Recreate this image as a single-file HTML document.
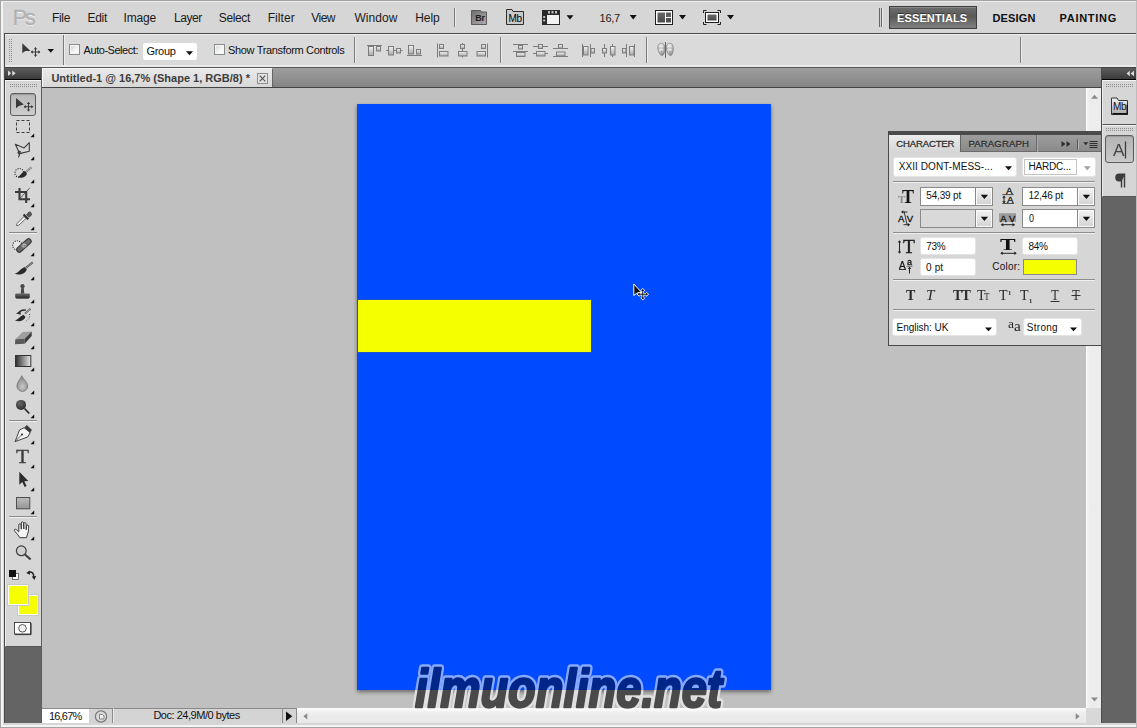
<!DOCTYPE html>
<html lang="en"><head><meta charset="utf-8"><title>Untitled-1 @ 16,7% (Shape 1, RGB/8) *</title>
<style>
*{box-sizing:border-box;margin:0;padding:0}
html,body{width:1137px;height:728px;overflow:hidden}
body{position:relative;background:#d6d6d6;font-family:"Liberation Sans",sans-serif;font-size:11px;color:#000}
.a{position:absolute}
.t{position:absolute;white-space:nowrap;line-height:1}
/* window frame */
#frame{left:0;top:0;width:1137px;height:728px;border:1px solid #a4a4a4;border-right-color:#bcbcbc;z-index:50;pointer-events:none}
#frame2{left:1px;top:1px;width:1135px;height:726px;border-left:2px solid #f4f4f4;border-bottom:2px solid #f4f4f4;border-top:1px solid #ececec;z-index:49}
#lgap{left:3px;top:33px;width:1px;height:691px;background:#cfcfcf}
#bline{left:4px;top:723px;width:1132px;height:1px;background:#3c3c3c}
#bline2{left:3px;top:724px;width:1133px;height:1px;background:#dcdcdc}
/* app/menu bar */
#ess{left:889px;top:6px;width:88px;height:23px;border:1px solid #3e3e3e;background:linear-gradient(#6e6e6e,#5a5a5a 45%,#808080);box-shadow:inset 0 1px 0 #8a8a8a}
.vsep{width:1px;background:#7a7a7a;box-shadow:1px 0 0 #ececec}
/* options bar */
#optbar{left:4px;top:33px;width:1132px;height:34px;background:#dadada;border-top:1px solid #4a4a4a;border-left:1px solid #4a4a4a;box-shadow:inset 0 1px 0 #f0f0f0}
#optbot{left:5px;top:65px;width:1131px;height:2px;background:#e9e9e9}
.cb{width:11px;height:11px;border:1px solid #8c8c8c;background:linear-gradient(135deg,#cfd4d8,#f4f6f7 60%,#fff);box-shadow:inset 0 0 0 1px #f4f4f4}
#grp{left:143px;top:43px;width:54px;height:17px;background:#fff;border-radius:2px}
/* tab bar */
#tabbar{left:4px;top:67px;width:1132px;height:21px;background:linear-gradient(#9d9d9d,#858585);border-top:1px solid #555;border-bottom:1px solid #444}
#tab{left:42px;top:68px;width:231px;height:19px;background:linear-gradient(#e9e9e9,#d8d8d8);border-left:1px solid #f6f6f6;border-top:1px solid #f6f6f6;border-right:1px solid #666}
#tabx{left:257px;top:73px;width:11px;height:11px;border:1px solid #8e8e8e;background:#e2e2e2}
/* left tool dock */
#ldock{left:4px;top:67px;width:38px;height:656px;background:#646464;border-left:1px solid #4a4a4a;border-right:1px solid #5e5e5e}
#lhead{left:5px;top:67px;width:36px;height:13px;background:linear-gradient(#5c5c5c,#3a3a3a);border-bottom:1px solid #000;border-top:1px solid #444}
#tools{left:5px;top:80px;width:36px;height:567px;background:#d6d6d6;border-top:1px solid #f4f4f4;border-left:1px solid #ececec;border-bottom:1px solid #555}
.grip{height:3px;background-image:radial-gradient(circle at 0.5px 0.5px,#8e8e8e 0.6px,transparent 0.7px);background-size:2px 2px}
.hsep{height:1px;background:#8a8a8a;box-shadow:0 1px 0 #f0f0f0}
#mvbtn{left:10px;top:93px;width:26px;height:23px;border:1px solid #5e5e5e;border-radius:3px;background:linear-gradient(#b9b9b9,#cdcdcd);box-shadow:inset 0 1px 1px #999}
/* canvas */
#canvas{left:42px;top:88px;width:1044px;height:620px;background:#c0c0c0}
#doc{left:357px;top:104px;width:414px;height:586px;background:#004bff;box-shadow:0 2px 4px rgba(0,0,0,.45)}
#yel{left:358px;top:300px;width:233px;height:52px;background:#f6ff00;box-shadow:0 0 0 1px rgba(70,90,150,.5)}
#vscroll{left:1086px;top:88px;width:15px;height:620px;background:linear-gradient(90deg,#fdfdfd,#f2f2f2 12%,#ececec 30%,#ededed)}
#vsb{left:1101px;top:67px;width:1px;height:656px;background:#4a4a4a}
/* status bar */
#status{left:42px;top:708px;width:1044px;height:15px;background:linear-gradient(#fdfdfd,#ededed 35%,#e9e9e9)}
#zoomf{left:42px;top:708px;width:47px;height:15px;background:#fff;border-top:1px solid #8a8a8a}
#sticon{left:89px;top:708px;width:24px;height:15px;background:#d4d4d4;border-right:1px solid #8a8a8a;border-top:1px solid #8a8a8a}
#docinfo{left:113px;top:708px;width:170px;height:15px;background:#d4d4d4;border-right:1px solid #8a8a8a;border-left:1px solid #ececec;border-top:1px solid #8a8a8a}
#playb{left:283px;top:708px;width:14px;height:15px;background:#d4d4d4;border-right:1px solid #8a8a8a;border-top:1px solid #8a8a8a}
#corner{left:1086px;top:708px;width:15px;height:15px;background:#d8d8d8}
/* right dock */
#rdock{left:1102px;top:67px;width:34px;height:656px;background:#646464}
#rhead{left:1102px;top:67px;width:34px;height:13px;background:linear-gradient(#5c5c5c,#3a3a3a);border-bottom:1px solid #000;border-top:1px solid #444}
.rp{left:1102px;width:34px;background:#d6d6d6;border-top:1px solid #f4f4f4;border-left:1px solid #ececec;border-bottom:1px solid #555}
#abtn{left:1105px;top:135px;width:29px;height:28px;border:1px solid #5e5e5e;border-radius:3px;background:linear-gradient(#b4b4b4,#c9c9c9);box-shadow:inset 0 1px 1px #999}
/* character panel */
#cp{left:888px;top:131px;width:214px;height:215px;background:#d6d6d6;border:1px solid #4a4a4a;border-top:4px solid #4a4a4a}
#cptabs{left:889px;top:135px;width:212px;height:17px;background:linear-gradient(#9d9d9d,#8a8a8a);border-bottom:1px solid #6c6c6c}
#cpt1{left:889px;top:135px;width:72px;height:17px;background:linear-gradient(#ececec,#d6d6d6);border-right:1px solid #666}
#cpt2{left:961px;top:135px;width:76px;height:17px;border-right:1px solid #6c6c6c;box-shadow:1px 0 0 #a8a8a8}
.wf{background:#fff;border-radius:2px;box-shadow:0 0 0 1px #e4e4e4}
.combo{border:1px solid #8a8a8a;background:#fff}
.cbtn{border:1px solid #8a8a8a;background:linear-gradient(#f4f4f4,#d2d2d2);box-shadow:inset 0 0 0 1px #fbfbfb}
.psep{left:893px;width:202px;height:1px;background:#8e8e8e;box-shadow:0 1px 0 #f0f0f0}

</style></head><body>
<div class="a" id="frame"></div><div class="a" id="frame2"></div>
<!-- app bar -->
<div class="a vsep" style="left:454px;top:8px;height:19px"></div>
<div class="a vsep" style="left:879px;top:8px;height:19px;box-shadow:none;background:#666"></div>
<div class="a vsep" style="left:881px;top:8px;height:19px;background:#666"></div>
<div class="a" id="ess"></div>
<!-- options bar -->
<div class="a" id="optbar"></div><div class="a" id="optbot"></div>
<div class="a" style="left:9px;top:39px;width:4px;height:23px;background-image:radial-gradient(circle at 0.5px 0.5px,#8e8e8e 0.6px,transparent 0.7px);background-size:2px 2px"></div>
<div class="a vsep" style="left:63px;top:35px;height:30px"></div>
<div class="a cb" style="left:69px;top:44px"></div>
<div class="a" id="grp"></div>
<div class="a cb" style="left:214px;top:44px"></div>
<div class="a vsep" style="left:354px;top:37px;height:26px"></div>
<div class="a vsep" style="left:500px;top:37px;height:26px"></div>
<div class="a vsep" style="left:646px;top:37px;height:26px"></div>
<div class="a vsep" style="left:1020px;top:37px;height:26px"></div>
<!-- tab bar -->
<div class="a" id="tabbar"></div>
<div class="a" id="tab"></div><div class="a" id="tabx"></div>
<!-- canvas -->
<div class="a" id="canvas"></div>
<div class="a" id="doc"></div>
<div class="a" id="yel"></div>
<div class="a" id="vscroll"></div>
<div class="a" id="status"></div><div class="a" id="zoomf"></div><div class="a" id="sticon"></div><div class="a" id="docinfo"></div><div class="a" id="playb"></div><div class="a" id="corner"></div>
<div class="a" id="vsb"></div>
<!-- left dock -->
<div class="a" id="ldock"></div><div class="a" id="lhead"></div><div class="a" id="tools"></div>
<div class="a grip" style="left:10px;top:84px;width:27px"></div>
<div class="a" id="mvbtn"></div>
<div class="a hsep" style="left:9px;top:232px;width:28px"></div>
<div class="a hsep" style="left:9px;top:420px;width:28px"></div>
<div class="a hsep" style="left:9px;top:516px;width:28px"></div>
<div class="a" style="left:18px;top:595px;width:20px;height:20px;background:#f6ff00;border:1px solid #fbfbfb;box-shadow:0 0 0 1px #c9c9c9"></div>
<div class="a" style="left:8px;top:585px;width:20px;height:20px;background:#f6ff00;border:1px solid #fbfbfb;box-shadow:0 0 0 1px #c9c9c9"></div>
<!-- right dock -->
<div class="a" id="rdock"></div><div class="a" id="rhead"></div>
<div class="a rp" style="top:80px;height:44px;border-bottom:none"></div>
<div class="a rp" style="top:124px;height:73px;border-top:1px solid #555"></div>
<div class="a" style="left:1103px;top:125px;width:33px;height:1px;background:#f4f4f4"></div>
<div class="a grip" style="left:1106px;top:84px;width:27px"></div>
<div class="a grip" style="left:1106px;top:128px;width:27px"></div>
<div class="a" id="abtn"></div>
<!-- character panel -->
<div class="a" id="cp"></div><div class="a" id="cptabs"></div><div class="a" id="cpt1"></div><div class="a" id="cpt2"></div>
<div class="a wf" style="left:894px;top:158px;width:122px;height:18px"></div>
<div class="a wf" style="left:1023px;top:158px;width:72px;height:18px"></div>
<div class="a" style="left:1024px;top:159px;width:53px;height:16px;border:1px solid #c4c4c4"></div>
<div class="a psep" style="top:181px"></div>
<div class="a combo" style="left:920px;top:187px;width:56px;height:19px"></div><div class="a cbtn" style="left:975px;top:187px;width:18px;height:19px"></div>
<div class="a combo" style="left:1022px;top:187px;width:56px;height:19px"></div><div class="a cbtn" style="left:1077px;top:187px;width:18px;height:19px"></div>
<div class="a combo" style="left:920px;top:209px;width:56px;height:19px;background:#d9d9d9"></div><div class="a cbtn" style="left:975px;top:209px;width:18px;height:19px"></div>
<div class="a combo" style="left:1022px;top:209px;width:56px;height:19px"></div><div class="a cbtn" style="left:1077px;top:209px;width:18px;height:19px"></div>
<div class="a psep" style="top:232px"></div>
<div class="a wf" style="left:921px;top:238px;width:54px;height:16px"></div>
<div class="a wf" style="left:1023px;top:238px;width:54px;height:16px"></div>
<div class="a wf" style="left:921px;top:259px;width:54px;height:16px"></div>
<div class="a" style="left:1023px;top:259px;width:54px;height:16px;background:#f6ff00;border:1px solid #8a8a8a"></div>
<div class="a psep" style="top:279px"></div>
<div class="a psep" style="top:309px"></div>
<div class="a wf" style="left:893px;top:319px;width:103px;height:16px"></div>
<div class="a wf" style="left:1024px;top:319px;width:57px;height:16px"></div>

<svg class="a" style="left:0;top:0" width="1137" height="728" viewBox="0 0 1137 728">
<defs>
<linearGradient id="gA" x1="0" y1="0" x2="0" y2="1"><stop offset="0" stop-color="#f4f4f4"/><stop offset="1" stop-color="#a8a8a8"/></linearGradient>
<linearGradient id="gD" x1="0" y1="0" x2="0" y2="1"><stop offset="0" stop-color="#6a6a6a"/><stop offset="1" stop-color="#2e2e2e"/></linearGradient>
<linearGradient id="gBr" x1="0" y1="0" x2="1" y2="1"><stop offset="0" stop-color="#6c6c6c"/><stop offset="1" stop-color="#b0b0b0"/></linearGradient>
<linearGradient id="gGr" x1="0" y1="0" x2="1" y2="0"><stop offset="0" stop-color="#2c2c2c"/><stop offset="1" stop-color="#e8e8e8"/></linearGradient>
<linearGradient id="gSh" x1="0" y1="0" x2="0" y2="1"><stop offset="0" stop-color="#bcbcbc"/><stop offset="1" stop-color="#969696"/></linearGradient>
<linearGradient id="gP" x1="0" y1="0" x2="0" y2="1"><stop offset="0" stop-color="#686868"/><stop offset="1" stop-color="#484848"/></linearGradient>
<radialGradient id="gDrop" cx=".5" cy=".7" r=".6"><stop offset="0" stop-color="#c8c8c8"/><stop offset="1" stop-color="#8a8a8a"/></radialGradient>
<radialGradient id="gBall" cx=".4" cy=".35" r=".7"><stop offset="0" stop-color="#6a6a6a"/><stop offset="1" stop-color="#2a2a2a"/></radialGradient>
</defs>
<path d="M471.5 10.5h9l1 1.5h5v12.5h-15z" fill="url(#gBr)" stroke="#5a5a5a" stroke-width="1"/>
<path d="M506.5 24.500v-15h5.500l1 2h10.500v13z" fill="#cacaca" stroke="#2e2e2e" stroke-width="1"/>
<rect x="542" y="10" width="18" height="15" fill="#2a2a2a"/>
<rect x="547" y="15" width="12" height="9" fill="#f2f2f2"/>
<rect x="548" y="11" width="2" height="2.5" fill="#bdbdbd"/>
<rect x="551.5" y="11" width="2" height="2.5" fill="#bdbdbd"/>
<rect x="555" y="11" width="2" height="2.5" fill="#bdbdbd"/>
<rect x="543.2" y="16" width="2" height="2" fill="#bdbdbd"/>
<rect x="543.2" y="19.5" width="2" height="2" fill="#bdbdbd"/>
<path d="M566.5 15.2h7l-3.5 4.3z" fill="#111"/>
<path d="M629.7 15h7l-3.5 4.4z" fill="#111"/>
<rect x="655.5" y="10.5" width="17" height="14" fill="#fff" stroke="#1e1e1e"/>
<rect x="657.5" y="12.500" width="7.500" height="10" fill="url(#gP)"/>
<rect x="666" y="12.500" width="5" height="4.500" fill="#5e5e5e"/><rect x="666" y="18" width="5" height="4.500" fill="#505050"/>
<path d="M679 15h7l-3.5 4.4z" fill="#111"/>
<path d="M703.500 13v-2.500h3M717.500 10.500h3v2.500M720.500 22v2.500h-3M706.500 24.500h-3v-2.500" fill="none" stroke="#1e1e1e" stroke-width="1"/>
<rect x="705.500" y="12.500" width="13" height="10" fill="#fff" stroke="#1e1e1e"/>
<rect x="707.500" y="14.500" width="9" height="6" fill="url(#gP)"/>
<path d="M727 15h7l-3.5 4.4z" fill="#111"/>
<path d="M22.300 43.300v10l2.600-2 .3-.2 5.300-.1z" fill="#3a3a3a"/>
<path d="M35.500 47.500v9M31 52h9" stroke="#3a3a3a" stroke-width="1" fill="none"/>
<path d="M33.700 49.300l1.800-2 1.800 2zM33.700 54.700l1.800 2 1.800-2zM32.800 50.200l-2 1.800 2 1.800zM38.200 50.200l2 1.800-2 1.800z" fill="#3a3a3a"/>
<path d="M47.5 49h6.5l-3.25 3.7z" fill="#111"/>
<path d="M186 51.3h7l-3.5 4z" fill="#111"/>
<path d="M367 45.5H382" stroke="#7c7c7c" stroke-width="1"/>
<rect x="368.5" y="46.5" width="5" height="9" fill="url(#gA)" stroke="#7c7c7c" stroke-width="1"/>
<rect x="376.5" y="46.5" width="4" height="4.5" fill="url(#gA)" stroke="#7c7c7c" stroke-width="1"/>
<path d="M386 50.5H402.5" stroke="#7c7c7c" stroke-width="1"/>
<rect x="388.5" y="46.5" width="5" height="8.5" fill="url(#gA)" stroke="#7c7c7c" stroke-width="1"/>
<rect x="396.5" y="48.5" width="4" height="4.5" fill="url(#gA)" stroke="#7c7c7c" stroke-width="1"/>
<path d="M407 55.5H422" stroke="#7c7c7c" stroke-width="1"/>
<rect x="408.5" y="45.5" width="5" height="8.5" fill="url(#gA)" stroke="#7c7c7c" stroke-width="1"/>
<rect x="416.5" y="49.5" width="4" height="4.5" fill="url(#gA)" stroke="#7c7c7c" stroke-width="1"/>
<path d="M437.5 43.5V57.5" stroke="#7c7c7c" stroke-width="1"/>
<rect x="439.5" y="44.5" width="4" height="4" fill="url(#gA)" stroke="#7c7c7c" stroke-width="1"/>
<rect x="439.5" y="51.5" width="8.5" height="4.5" fill="url(#gA)" stroke="#7c7c7c" stroke-width="1"/>
<path d="M462.5 43V57.5" stroke="#7c7c7c" stroke-width="1"/>
<rect x="460.5" y="44.5" width="4" height="4" fill="url(#gA)" stroke="#7c7c7c" stroke-width="1"/>
<rect x="458.5" y="51.5" width="8.5" height="4.5" fill="url(#gA)" stroke="#7c7c7c" stroke-width="1"/>
<path d="M487.5 43.5V57.5" stroke="#7c7c7c" stroke-width="1"/>
<rect x="481.5" y="44.5" width="4" height="4" fill="url(#gA)" stroke="#7c7c7c" stroke-width="1"/>
<rect x="477" y="51.5" width="8.5" height="4.5" fill="url(#gA)" stroke="#7c7c7c" stroke-width="1"/>
<path d="M513 44.5H528" stroke="#7c7c7c" stroke-width="1"/>
<path d="M513 51.5H528" stroke="#7c7c7c" stroke-width="1"/>
<rect x="518.5" y="45.5" width="4" height="3.5" fill="url(#gA)" stroke="#7c7c7c" stroke-width="1"/>
<rect x="516.5" y="52.5" width="8.5" height="4" fill="url(#gA)" stroke="#7c7c7c" stroke-width="1"/>
<path d="M533 46.5H548" stroke="#7c7c7c" stroke-width="1"/>
<path d="M533 53.5H548" stroke="#7c7c7c" stroke-width="1"/>
<rect x="538.5" y="44.5" width="4" height="4" fill="url(#gA)" stroke="#7c7c7c" stroke-width="1"/>
<rect x="536.5" y="51.5" width="8.5" height="4.5" fill="url(#gA)" stroke="#7c7c7c" stroke-width="1"/>
<path d="M553 48.5H568" stroke="#7c7c7c" stroke-width="1"/>
<path d="M553 56.5H568" stroke="#7c7c7c" stroke-width="1"/>
<rect x="558.5" y="44.5" width="4" height="3.8" fill="url(#gA)" stroke="#7c7c7c" stroke-width="1"/>
<rect x="556.5" y="52" width="8.5" height="4" fill="url(#gA)" stroke="#7c7c7c" stroke-width="1"/>
<path d="M582.5 44V57" stroke="#7c7c7c" stroke-width="1"/>
<path d="M590.5 44V57" stroke="#7c7c7c" stroke-width="1"/>
<rect x="583.5" y="46.5" width="4.5" height="8.5" fill="url(#gA)" stroke="#7c7c7c" stroke-width="1"/>
<rect x="591" y="48.5" width="3.5" height="4.5" fill="url(#gA)" stroke="#7c7c7c" stroke-width="1"/>
<path d="M604.5 44V57" stroke="#7c7c7c" stroke-width="1"/>
<path d="M612.5 44V57" stroke="#7c7c7c" stroke-width="1"/>
<rect x="602.5" y="48.5" width="4" height="4.5" fill="url(#gA)" stroke="#7c7c7c" stroke-width="1"/>
<rect x="610.5" y="46.5" width="4.5" height="8.5" fill="url(#gA)" stroke="#7c7c7c" stroke-width="1"/>
<path d="M626.5 44V57" stroke="#7c7c7c" stroke-width="1"/>
<path d="M634.5 44V57" stroke="#7c7c7c" stroke-width="1"/>
<rect x="622.5" y="48.5" width="3.5" height="4.5" fill="url(#gA)" stroke="#7c7c7c" stroke-width="1"/>
<rect x="629.5" y="46.5" width="4.5" height="8.5" fill="url(#gA)" stroke="#7c7c7c" stroke-width="1"/>
<radialGradient id="gF" cx=".45" cy=".35" r=".65"><stop offset="0" stop-color="#fafafa"/><stop offset=".5" stop-color="#d4d4d4"/><stop offset="1" stop-color="#7c7c7c"/></radialGradient>
<g transform="translate(0 0)"><path d="M661.200 43.200c-2.300 0-3.400 1.800-3.400 4.300 0 2.500.9 5 2.100 6.800.9 1.300 2.700 1.600 3.500.5 1-1.600 1.400-4.300 1.400-7.300 0-2.500-1.300-4.300-3.600-4.300z" fill="url(#gF)" stroke="#909090" stroke-width=".8"/><path d="M658.200 48.300c2-.5 4-.5 6.200 0" stroke="#9a9a9a" stroke-width=".8" fill="none"/><circle cx="661.400" cy="51.600" r=".7" fill="#7a7a7a"/><path d="M660.300 53.700h2.200" stroke="#a0a0a0" stroke-width=".7"/></g>
<g transform="translate(8.5 0)"><path d="M661.200 43.200c-2.300 0-3.400 1.800-3.400 4.300 0 2.500.9 5 2.100 6.800.9 1.300 2.700 1.600 3.500.5 1-1.600 1.400-4.300 1.400-7.300 0-2.500-1.300-4.300-3.600-4.300z" fill="url(#gF)" stroke="#909090" stroke-width=".8"/><path d="M658.200 48.300c2-.5 4-.5 6.200 0" stroke="#9a9a9a" stroke-width=".8" fill="none"/><circle cx="661.400" cy="51.600" r=".7" fill="#7a7a7a"/><path d="M660.300 53.700h2.200" stroke="#a0a0a0" stroke-width=".7"/></g>
<path d="M665.500 42v15.800" stroke="#666" stroke-width="1"/>
<path d="M259.700 75.700l5.600 5.600M265.300 75.700l-5.600 5.600" stroke="#5a5a5a" stroke-width="1.200"/>
<path d="M8 70.500l3.300 2.800-3.300 2.800zM12.300 70.500l3.300 2.800-3.300 2.800z" fill="#dcdcdc"/>
<path d="M1134 70.800l-3.300 2.700 3.300 2.700zM1129.800 70.800l-3.300 2.700 3.300 2.700z" fill="#dcdcdc"/>
<path d="M16 98v10.300l2.800-2.200 5-1.600z" fill="#3a3a3a"/>
<path d="M28.500 102.200v9M24 106.700h9" stroke="#3a3a3a" stroke-width="1" fill="none"/>
<path d="M26.700 104l1.800-2 1.800 2zM26.700 109.400l1.800 2 1.800-2zM25.800 104.900l-2 1.800 2 1.800zM31.200 104.900l2 1.800-2 1.800z" fill="#3a3a3a"/>
<rect x="16.500" y="120.500" width="13" height="12" fill="none" stroke="#3a3a3a" stroke-width="1" stroke-dasharray="3 2"/>
<path d="M34.2 133.5v3.700h-3.700z" fill="#0c0c0c"/>
<path d="M15.300 144.300l8.800 3.600 5.200-5.300v8.600l-9.600 2.400zM20.800 152.500a1.400 1.400 0 1 0-1.700 1.600l.6-.1-1.200 3.400" fill="none" stroke="#3a3a3a" stroke-width="1.100" stroke-linejoin="round"/>
<path d="M34.2 156.5v3.700h-3.700z" fill="#0c0c0c"/>
<circle cx="19.300" cy="172.900" r="4.400" fill="none" stroke="#222" stroke-width="1.200" stroke-dasharray="1 1.300"/>
<path d="M24.500 173.300l7-6" stroke="#777" stroke-width="2"/><path d="M24.500 173.300l7-6" stroke="#d8d8d8" stroke-width=".7"/>
<path d="M17.800 177c2.300-.4 3-3.900 6.900-5.900l2.200 2.400c-.4 3.200-5 5.400-9.100 3.500z" fill="#2a2a2a"/>
<path d="M34.2 179.5v3.700h-3.700z" fill="#0c0c0c"/>
<path d="M19.500 188v11.200H30M15 192h11.200v11" fill="none" stroke="#3a3a3a" stroke-width="2.100"/><path d="M29.800 187.800L20.500 198" stroke="#3a3a3a" stroke-width=".8"/>
<path d="M34.2 203.5v3.700h-3.700z" fill="#0c0c0c"/>
<path d="M16.600 225.600l.4-2 7-7.200 2 2-7.300 6.900z" fill="#f6f6f6" stroke="#555" stroke-width=".9"/>
<path d="M22.800 215.300l4.800 4.800 1.500-1.500-4.800-4.800z" fill="#2a2a2a"/>
<path d="M26 214.700l2-2.300a2.300 2.300 0 0 1 3.300 3.300l-2.300 2z" fill="#555"/>
<path d="M34.2 226.5v3.700h-3.700z" fill="#0c0c0c"/>
<circle cx="17.300" cy="245.400" r="4.600" fill="#e6e6e6" stroke="#222" stroke-width="1.100" stroke-dasharray="1 1.300"/>
<path d="M19.300 249.600l9.300-8.200" stroke="#3c3c3c" stroke-width="6.200" stroke-linecap="round"/>
<path d="M19.300 249.600l9.300-8.200" stroke="#6a6a6a" stroke-width="4" stroke-linecap="round"/>
<path d="M22.300 247l3.400-3" stroke="#8c8c8c" stroke-width="4.600"/>
<circle cx="23" cy="246.300" r=".6" fill="#ddd"/><circle cx="25" cy="244.600" r=".6" fill="#ddd"/><circle cx="23.300" cy="244.700" r=".5" fill="#ddd"/>
<path d="M34.2 252.5v3.700h-3.700z" fill="#0c0c0c"/>
<path d="M25.800 268l7-5.800" stroke="#444" stroke-width="2"/><path d="M26.200 267.800l6.500-5.400" stroke="#ddd" stroke-width=".6"/>
<path d="M14.600 273.500c3.700-.2 5-4.500 9.900-6.600l2.300 2.500c-1.300 4-7.500 6.700-12.200 4.100z" fill="#2a2a2a"/>
<path d="M34.2 276.5v3.700h-3.700z" fill="#0c0c0c"/>
<circle cx="22.500" cy="286.200" r="2.100" fill="#4a4a4a"/><path d="M21.300 287.500h2.400l.6 6.300h-3.600z" fill="#4a4a4a"/>
<rect x="15.200" y="293.600" width="14.600" height="4.400" rx=".8" fill="url(#gD)"/><rect x="16.200" y="298" width="12.600" height="1" fill="#666"/>
<path d="M34.2 299.5v3.700h-3.700z" fill="#0c0c0c"/>
<path d="M25 313.600l5.500-5" stroke="#555" stroke-width="1.900"/><path d="M25.300 313.400l5-4.500" stroke="#ddd" stroke-width=".6"/>
<path d="M14.900 320.200c3.300-.2 4.500-3.900 8.600-5.500l2 2.200c-1.200 3.400-6.300 5.800-10.600 3.300z" fill="#2a2a2a"/>
<path d="M18.500 313.200c1.500-2.600 4.500-3.600 7.500-3" fill="none" stroke="#2e2e2e" stroke-width="1.300"/><path d="M16 313.600l4.300-2.800.6 4z" fill="#2e2e2e"/>
<path d="M29.500 314c.8 2.300-.3 5-3 6.800" fill="none" stroke="#444" stroke-width="1" stroke-dasharray="1 1.400"/>
<path d="M34.2 322.5v3.700h-3.700z" fill="#0c0c0c"/>
<path d="M15.300 339.200l7.500-7.200 8.900-.6-7 7.300z" fill="#9e9e9e"/><path d="M15.300 339.200l9.400-.5v5l-9.700.5z" fill="#5a5a5a"/><path d="M24.700 338.700l7-7.300v4.500l-7 7.800z" fill="#3e3e3e"/>
<path d="M34.2 345.5v3.700h-3.700z" fill="#0c0c0c"/>
<rect x="15.500" y="355.500" width="15.300" height="11" fill="url(#gGr)" stroke="#333"/>
<path d="M34.2 367.5v3.700h-3.700z" fill="#0c0c0c"/>
<path d="M21.700 375.700c1.500 3.500 6 6.500 6 10.300a5.400 5.400 0 0 1-10.800 0c0-3.800 3.700-6.800 4.800-10.300z" fill="url(#gDrop)" stroke="#7a7a7a" stroke-width=".9"/>
<path d="M34.2 390.5v3.700h-3.700z" fill="#0c0c0c"/>
<circle cx="21" cy="404.900" r="5" fill="url(#gBall)"/><path d="M24.500 408.500l4.800 5" stroke="#222" stroke-width="1.600"/>
<path d="M34.2 414.5v3.700h-3.700z" fill="#0c0c0c"/>
<path d="M15.100 441.600l4.400-11.600 4.600-2.300 6.200 4.700-2.600 4.600z" fill="#f2f2f2" stroke="#444" stroke-width="1" stroke-linejoin="round"/>
<path d="M15.100 441.600l6.300-6.600" stroke="#444" stroke-width=".8"/><circle cx="22" cy="434.400" r="1" fill="#222"/>
<path d="M24.300 427.800l2.400-2.700 5.300 4.800-2.200 2.800z" fill="#3a3a3a"/>
<path d="M34.2 440.5v3.700h-3.700z" fill="#0c0c0c"/>
<path d="M34.2 464.5v3.700h-3.700z" fill="#0c0c0c"/>
<path d="M19.300 471.800v13l3-2.800 2.300 5 2-.9-2.300-4.900 4-.2z" fill="#2c2c2c"/>
<path d="M34.2 487.5v3.700h-3.700z" fill="#0c0c0c"/>
<rect x="16.500" y="497.500" width="13.300" height="11.300" fill="url(#gSh)" stroke="#4e4e4e"/>
<path d="M34.2 510.5v3.700h-3.700z" fill="#0c0c0c"/>
<path d="M19.800 537.700c-1.300-2.300-3.300-4.700-5.300-6.800-.7-1 .4-2.300 1.700-1.400l2.600 2.400v-7c0-1.500 2-1.600 2.200-.1l.3 4.400v-6.200c0-1.500 2.200-1.600 2.300 0l.2 6v-5.400c.1-1.400 2.200-1.400 2.300.1l.1 6 .4-3.800c.2-1.300 2-1.200 2 .2.100 3.500-.3 6.500-1.300 8.800l-.8 2.800z" fill="#f4f4f4" stroke="#3a3a3a" stroke-width="1" stroke-linejoin="round"/>
<path d="M34.2 536.5v3.700h-3.700z" fill="#0c0c0c"/>
<circle cx="21.300" cy="550.800" r="4.900" fill="#d0d0d0" stroke="#3e3e3e" stroke-width="1.200"/><path d="M25 554.600l5.600 5" stroke="#3a3a3a" stroke-width="2"/>
<rect x="12.500" y="573.500" width="6" height="6" fill="#fff" stroke="#555" stroke-width=".8"/><rect x="9" y="570" width="7" height="7" fill="#111"/>
<path d="M28.800 572.300c2.300-.6 4 .3 4.600 2.200l.6 2.800" fill="none" stroke="#222" stroke-width="1.400"/><path d="M26.200 573l3.600-2.600.3 4.300zM31.700 576.500l2.700 3.500 1.700-4.100z" fill="#222"/>
<rect x="14.500" y="622.500" width="16" height="11.500" fill="#fdfdfd" stroke="#3a3a3a" stroke-width=".9"/><path d="M15 634.600h16.100v-11.500" fill="none" stroke="#2a2a2a" stroke-width=".9"/><circle cx="22.500" cy="628.300" r="3.800" fill="#f2f2f2" stroke="#2e2e2e" stroke-width=".8"/>
<circle cx="101" cy="716.500" r="5.600" fill="#d8d8d8" stroke="#7a7a7a" stroke-width="1.200"/><path d="M99.500 714.500h3l1.500 1.500v3h-4.500z" fill="#eee" stroke="#7a7a7a" stroke-width=".9"/>
<path d="M286 711.500v9.500l6.300-4.700z" fill="#111"/>
<path d="M307.300 713.200v6.200l-4-3.100z" fill="#8a8a8a"/>
<path d="M1075.700 713.200v6.200l4-3.100z" fill="#8a8a8a"/>
<path d="M1091 98.800h7l-3.500-4z" fill="#8a8a8a"/>
<path d="M1091 697.500h7l-3.500 4z" fill="#8a8a8a"/>
<path d="M1111.500 114.500v-16.500h5.500l1.500 2.500h9v14z" fill="url(#gA)" stroke="#333" stroke-width="1"/><path d="M1112.500 113.700h14.700v-9" stroke="#111" stroke-width="1.400" fill="none"/>
<path d="M1124.500 174v13.500M1121.500 174v13.500" stroke="#3c3c3c" stroke-width="1.400"/><path d="M1125.500 173.500h-6.300a4 4 0 0 0 0 8h2.300" fill="#3c3c3c"/>
<path d="M1125.500 141.500v17" stroke="#3c3c3c" stroke-width="1.300"/>
<path d="M1061.500 141l4 3-4 3zM1066.500 141l4 3-4 3z" fill="#2e2e2e"/>
<path d="M1077.500 139.500v10" stroke="#555"/><path d="M1078.500 139.500v10" stroke="#b4b4b4"/>
<path d="M1083.300 142.200h5l-2.500 3z" fill="#2e2e2e"/><path d="M1089.500 141.500h8M1089.500 143.500h8M1089.500 145.500h8M1089.500 147.500h8" stroke="#2e2e2e" stroke-width="1"/>
<path d="M1005 166.2h7l-3.5 4z" fill="#111"/>
<path d="M1083.8 166.2h7l-3.5 4z" fill="#a2a2a2"/>
<path d="M980.7 194.7h7.4l-3.7 4.3z" fill="#111"/>
<path d="M1082.7 194.7h7.4l-3.7 4.3z" fill="#111"/>
<path d="M980.7 216.7h7.4l-3.7 4.3z" fill="#111"/>
<path d="M1082.7 216.7h7.4l-3.7 4.3z" fill="#111"/>
<path d="M985 327.4h7l-3.5 3.8z" fill="#111"/>
<path d="M1070 327.4h7l-3.5 3.8z" fill="#111"/>
<path d="M904.200 211.700l2.900 13.300" stroke="#222" stroke-width=".9" fill="none"/><path d="M902.500 212h5M903.500 224.700h5" stroke="#222" stroke-width=".9"/><path d="M903.300 210.300l-2.300 1.700 2.300 1.700zM907.800 223l2.400 1.700-2.400 1.700z" fill="#222"/>
<rect x="999" y="213.200" width="17" height="8.700" fill="#9c9c9c"/>
<path d="M1002 224.700h12" stroke="#222" stroke-width="1"/><path d="M1003.300 222.900l-2.700 1.800 2.700 1.800zM1012.500 222.900l2.700 1.800-2.700 1.800z" fill="#222"/>
<path d="M1002.300 194.600h11.500M1002.300 203.500h11.500" stroke="#444" stroke-width=".9"/><path d="M1004 196.500v6" stroke="#222" stroke-width="1"/><path d="M1002.200 197.800l1.800-2.300 1.800 2.300zM1002.200 201.200l1.800 2.300 1.800-2.300z" fill="#222"/>
<path d="M899.500 241v12" stroke="#222" stroke-width="1"/><path d="M897.700 242.500l1.800-2.300 1.800 2.300zM897.700 251.500l1.800 2.300 1.800-2.300z" fill="#222"/>
<path d="M1001 253.300h15" stroke="#222" stroke-width="1"/><path d="M1002.700 251.500l-2.500 1.800 2.500 1.800zM1014.300 251.500l2.500 1.800-2.500 1.800z" fill="#222"/>
<path d="M899 269.500h7" stroke="#222" stroke-width=".9"/><path d="M909.500 267v6.500" stroke="#222" stroke-width="1"/><path d="M907.800 269l1.700-2.200 1.700 2.200z" fill="#222"/><path d="M906.500 266.300h6" stroke="#555" stroke-width=".8"/>
<path d="M1050.500 301.500h9" stroke="#333" stroke-width="1"/><path d="M1071.500 295.500h9" stroke="#333" stroke-width="1"/>
<clipPath id="c1"><rect x="357" y="600" width="414" height="90"/></clipPath><clipPath id="c2"><rect x="300" y="690" width="500" height="18"/></clipPath><clipPath id="c3"><rect x="300" y="708" width="500" height="20"/></clipPath>
<text x="415" y="706.5" clip-path="url(#c1)" font-family="Liberation Sans,sans-serif" font-weight="700" font-style="italic" font-size="53" textLength="307" lengthAdjust="spacingAndGlyphs" stroke-linejoin="round" fill="#86a8ff" stroke="#86a8ff" stroke-width="7.600">ilmuonline.net</text>
<text x="415" y="706.5" clip-path="url(#c1)" font-family="Liberation Sans,sans-serif" font-weight="700" font-style="italic" font-size="53" textLength="307" lengthAdjust="spacingAndGlyphs" stroke-linejoin="round" fill="#00268a" stroke="#00268a" stroke-width="2.400">ilmuonline.net</text>
<text x="415" y="706.5" clip-path="url(#c2)" font-family="Liberation Sans,sans-serif" font-weight="700" font-style="italic" font-size="53" textLength="307" lengthAdjust="spacingAndGlyphs" stroke-linejoin="round" fill="#e0e0e0" stroke="#e0e0e0" stroke-width="7.600">ilmuonline.net</text>
<text x="415" y="706.5" clip-path="url(#c2)" font-family="Liberation Sans,sans-serif" font-weight="700" font-style="italic" font-size="53" textLength="307" lengthAdjust="spacingAndGlyphs" stroke-linejoin="round" fill="#4a4a4a" stroke="#4a4a4a" stroke-width="2.400">ilmuonline.net</text>
<text x="415" y="706.5" clip-path="url(#c3)" font-family="Liberation Sans,sans-serif" font-weight="700" font-style="italic" font-size="53" textLength="307" lengthAdjust="spacingAndGlyphs" stroke-linejoin="round" fill="#fafafa" stroke="#fafafa" stroke-width="7.600">ilmuonline.net</text>
<text x="415" y="706.5" clip-path="url(#c3)" font-family="Liberation Sans,sans-serif" font-weight="700" font-style="italic" font-size="53" textLength="307" lengthAdjust="spacingAndGlyphs" stroke-linejoin="round" fill="#5e5e5e" stroke="#5e5e5e" stroke-width="2.400">ilmuonline.net</text>
<g transform="translate(-.7 -.5)">
<path d="M634.500 284.500v11.500l2.800-2.200 1.700-.6 3.400-.2z" fill="#111" stroke="#fff" stroke-width="1"/>
<path d="M643.500 290v9.500M638.800 294.700h9.400" stroke="#fff" stroke-width="2.600"/><path d="M643.500 288.500l-2.700 3h5.400zM643.500 301l-2.700-3h5.400zM637.300 294.700l3-2.700v5.400zM649.700 294.700l-3-2.700v5.400z" fill="#fff"/>
<path d="M643.500 290v9.500M638.800 294.700h9.400" stroke="#111" stroke-width="1"/><path d="M643.500 289.600l-1.600 1.900h3.200zM643.500 299.900l-1.600-1.900h3.200zM638.400 294.700l1.900-1.600v3.200zM648.600 294.700l-1.900-1.600v3.200z" fill="#111"/>
</g>
</svg>
<span class="t" style="left:12.6px;top:7px;font-size:22px;color:#b2b2b2;letter-spacing:-2.544px;text-shadow:0 1px 0 #f6f6f6;-webkit-text-stroke:.4px #b2b2b2;">Ps</span>
<span class="t" style="left:52px;top:12px;font-size:12px;color:#1a1a1a;letter-spacing:-0.336px;">File</span>
<span class="t" style="left:87.5px;top:12px;font-size:12px;color:#1a1a1a;letter-spacing:-0.297px;">Edit</span>
<span class="t" style="left:123.5px;top:12px;font-size:12px;color:#1a1a1a;letter-spacing:-0.172px;">Image</span>
<span class="t" style="left:174px;top:12px;font-size:12px;color:#1a1a1a;letter-spacing:-0.466px;">Layer</span>
<span class="t" style="left:218.8px;top:12px;font-size:12px;color:#1a1a1a;letter-spacing:-0.36px;">Select</span>
<span class="t" style="left:267.7px;top:12px;font-size:12px;color:#1a1a1a;letter-spacing:0.055px;">Filter</span>
<span class="t" style="left:311.3px;top:12px;font-size:12px;color:#1a1a1a;letter-spacing:-0.524px;">View</span>
<span class="t" style="left:354.4px;top:12px;font-size:12px;color:#1a1a1a;letter-spacing:0.052px;">Window</span>
<span class="t" style="left:415.3px;top:12px;font-size:12px;color:#1a1a1a;letter-spacing:-0.097px;">Help</span>
<span class="t" style="left:475.3px;top:14px;font-size:9px;font-weight:700;color:#1e1e1e;letter-spacing:-0.358px;">Br</span>
<span class="t" style="left:508.6px;top:14px;font-size:10px;letter-spacing:-0.353px;">Mb</span>
<span class="t" style="left:599.6px;top:13px;font-size:11px;color:#1a1a1a;letter-spacing:-0.255px;">16,7</span>
<span class="t" style="left:897px;top:13px;font-size:11px;font-weight:700;color:#fff;letter-spacing:0.122px;text-shadow:0 -1px 0 #333;">ESSENTIALS</span>
<span class="t" style="left:992.4px;top:13px;font-size:11px;font-weight:700;color:#111;letter-spacing:0.185px;">DESIGN</span>
<span class="t" style="left:1059.5px;top:13px;font-size:11px;font-weight:700;color:#111;letter-spacing:0.719px;">PAINTING</span>
<span class="t" style="left:83.6px;top:45px;font-size:11px;color:#111;letter-spacing:-0.46px;">Auto-Select:</span>
<span class="t" style="left:146.5px;top:46px;font-size:11px;color:#111;letter-spacing:-0.316px;">Group</span>
<span class="t" style="left:228px;top:45px;font-size:11px;color:#111;letter-spacing:-0.335px;">Show Transform Controls</span>
<span class="t" style="left:51.4px;top:73px;font-size:11px;font-weight:700;color:#3c3c3c;letter-spacing:0.006px;">Untitled-1 @ 16,7% (Shape 1, RGB/8) *</span>
<span class="t" style="left:896.3px;top:139px;font-size:9.5px;color:#333;letter-spacing:-0.125px;text-shadow:0 1px 0 #f6f6f6;-webkit-text-stroke:.35px #333;">CHARACTER</span>
<span class="t" style="left:968.5px;top:139px;font-size:9.5px;color:#303030;letter-spacing:0.172px;text-shadow:0 1px 0 #b0b0b0;-webkit-text-stroke:.35px #303030;">PARAGRAPH</span>
<span class="t" style="left:898.8px;top:162px;font-size:10px;color:#111;letter-spacing:0.067px;">XXII DONT-MESS-...</span>
<span class="t" style="left:1028.5px;top:162px;font-size:10px;color:#111;letter-spacing:-0.201px;">HARDC...</span>
<span class="t" style="left:926.3px;top:191px;font-size:10px;color:#111;letter-spacing:-0.182px;">54,39 pt</span>
<span class="t" style="left:1028.5px;top:191px;font-size:10px;color:#111;letter-spacing:-0.207px;">12,46 pt</span>
<span class="t" style="left:1028.5px;top:214px;font-size:10px;color:#111;transform:scaleX(0.899);transform-origin:0 0;">0</span>
<span class="t" style="left:926.3px;top:242px;font-size:10px;color:#111;letter-spacing:-0.339px;">73%</span>
<span class="t" style="left:1028.5px;top:242px;font-size:10px;color:#111;letter-spacing:-0.339px;">84%</span>
<span class="t" style="left:926px;top:263px;font-size:10px;color:#111;letter-spacing:0.153px;">0 pt</span>
<span class="t" style="left:992.2px;top:262px;font-size:10px;color:#111;letter-spacing:0.252px;">Color:</span>
<span class="t" style="left:896.6px;top:323px;font-size:10px;color:#111;letter-spacing:-0.05px;">English: UK</span>
<span class="t" style="left:1026.8px;top:323px;font-size:10px;color:#111;letter-spacing:0.272px;">Strong</span>
<span class="t" style="left:49px;top:711px;font-size:11px;color:#111;letter-spacing:-0.819px;">16,67%</span>
<span class="t" style="left:153.4px;top:710px;font-size:11px;color:#111;letter-spacing:-0.471px;">Doc: 24,9M/0 bytes</span>
<span class="t" style="left:15.7px;top:447px;font-size:19.5px;color:#3a3a3a;transform:scaleX(1.09);transform-origin:0 0;font-family:'Liberation Serif',serif;will-change:transform;-webkit-text-stroke:.3px #3a3a3a;">T</span>
<span class="t" style="left:1112.5px;top:143px;font-size:16px;color:#444;transform:scaleX(1.078);transform-origin:0 0;will-change:transform;">A</span>
<span class="t" style="left:897.8px;top:194px;font-size:11px;font-weight:700;color:#8a8a8a;transform:scaleX(0.953);transform-origin:0 0;font-family:'Liberation Serif',serif;will-change:transform;">T</span>
<span class="t" style="left:902.3px;top:187px;font-size:19.5px;font-weight:700;color:#111;transform:scaleX(0.922);transform-origin:0 0;font-family:'Liberation Serif',serif;will-change:transform;">T</span>
<span class="t" style="left:898px;top:214px;font-size:9.5px;color:#111;-webkit-text-stroke:.3px #111;">A</span>
<span class="t" style="left:906.8px;top:214px;font-size:9.5px;color:#111;-webkit-text-stroke:.3px #111;">V</span>
<span class="t" style="left:1006.2px;top:187px;font-size:9px;color:#111;transform:scaleX(1.081);transform-origin:0 0;-webkit-text-stroke:.3px #111;">A</span>
<span class="t" style="left:1007.2px;top:196px;font-size:9px;color:#111;transform:scaleX(1.081);transform-origin:0 0;-webkit-text-stroke:.3px #111;">A</span>
<span class="t" style="left:1000.3px;top:214px;font-size:9.5px;color:#111;-webkit-text-stroke:.3px #111;">A</span>
<span class="t" style="left:1009px;top:214px;font-size:9.5px;color:#111;-webkit-text-stroke:.3px #111;">V</span>
<span class="t" style="left:902.7px;top:237px;font-size:19.5px;color:#1a1a1a;font-family:'Liberation Serif',serif;will-change:transform;-webkit-text-stroke:.35px #1a1a1a;">T</span>
<span class="t" style="left:1000.3px;top:237px;font-size:16px;font-weight:700;color:#111;transform:scaleX(1.462);transform-origin:0 0;font-family:'Liberation Serif',serif;will-change:transform;">T</span>
<span class="t" style="left:898.8px;top:261px;font-size:10px;color:#111;-webkit-text-stroke:.2px #111;will-change:transform;">A</span>
<span class="t" style="left:907px;top:258px;font-size:8.5px;color:#111;transform:scaleX(1.056);transform-origin:0 0;-webkit-text-stroke:.3px #111;">a</span>
<span class="t" style="left:906px;top:289px;font-size:14px;font-weight:700;color:#2a2a2a;transform:scaleX(0.963);transform-origin:0 0;font-family:'Liberation Serif',serif;will-change:transform;">T</span>
<span class="t" style="left:926.3px;top:289px;font-size:14px;color:#2a2a2a;transform:scaleX(1.09);transform-origin:0 0;font-family:'Liberation Serif',serif;will-change:transform;font-style:italic;">T</span>
<span class="t" style="left:953.3px;top:289px;font-size:14px;font-weight:700;color:#2a2a2a;letter-spacing:-0.844px;font-family:'Liberation Serif',serif;will-change:transform;">TT</span>
<span class="t" style="left:977.4px;top:289px;font-size:14px;color:#2a2a2a;transform:scaleX(0.969);transform-origin:0 0;font-family:'Liberation Serif',serif;will-change:transform;">T</span>
<span class="t" style="left:984.3px;top:292px;font-size:10px;color:#2a2a2a;transform:scaleX(0.9);transform-origin:0 0;font-family:'Liberation Serif',serif;will-change:transform;">T</span>
<span class="t" style="left:999px;top:289px;font-size:14px;color:#2a2a2a;font-family:'Liberation Serif',serif;will-change:transform;">T</span>
<span class="t" style="left:1008px;top:290px;font-size:6.5px;font-weight:700;color:#2a2a2a;transform:scaleX(0.923);transform-origin:0 0;font-family:'Liberation Serif',serif;will-change:transform;">1</span>
<span class="t" style="left:1020px;top:289px;font-size:14px;color:#2a2a2a;font-family:'Liberation Serif',serif;will-change:transform;">T</span>
<span class="t" style="left:1028.5px;top:298px;font-size:6.5px;font-weight:700;color:#2a2a2a;transform:scaleX(0.923);transform-origin:0 0;font-family:'Liberation Serif',serif;will-change:transform;">1</span>
<span class="t" style="left:1051px;top:289px;font-size:14px;color:#2a2a2a;transform:scaleX(0.934);transform-origin:0 0;font-family:'Liberation Serif',serif;will-change:transform;">T</span>
<span class="t" style="left:1072px;top:289px;font-size:14px;color:#2a2a2a;transform:scaleX(0.934);transform-origin:0 0;font-family:'Liberation Serif',serif;will-change:transform;">T</span>
<span class="t" style="left:1007.6px;top:317px;font-size:13px;color:#222;transform:scaleX(1.038);transform-origin:0 0;font-family:'Liberation Serif',serif;will-change:transform;">a</span>
<span class="t" style="left:1014px;top:319px;font-size:14.5px;color:#222;transform:scaleX(1.056);transform-origin:0 0;font-family:'Liberation Serif',serif;will-change:transform;">a</span>
<span class="t" style="left:1113px;top:102px;font-size:10px;color:#111;letter-spacing:-0.453px;">Mb</span>
</body></html>
